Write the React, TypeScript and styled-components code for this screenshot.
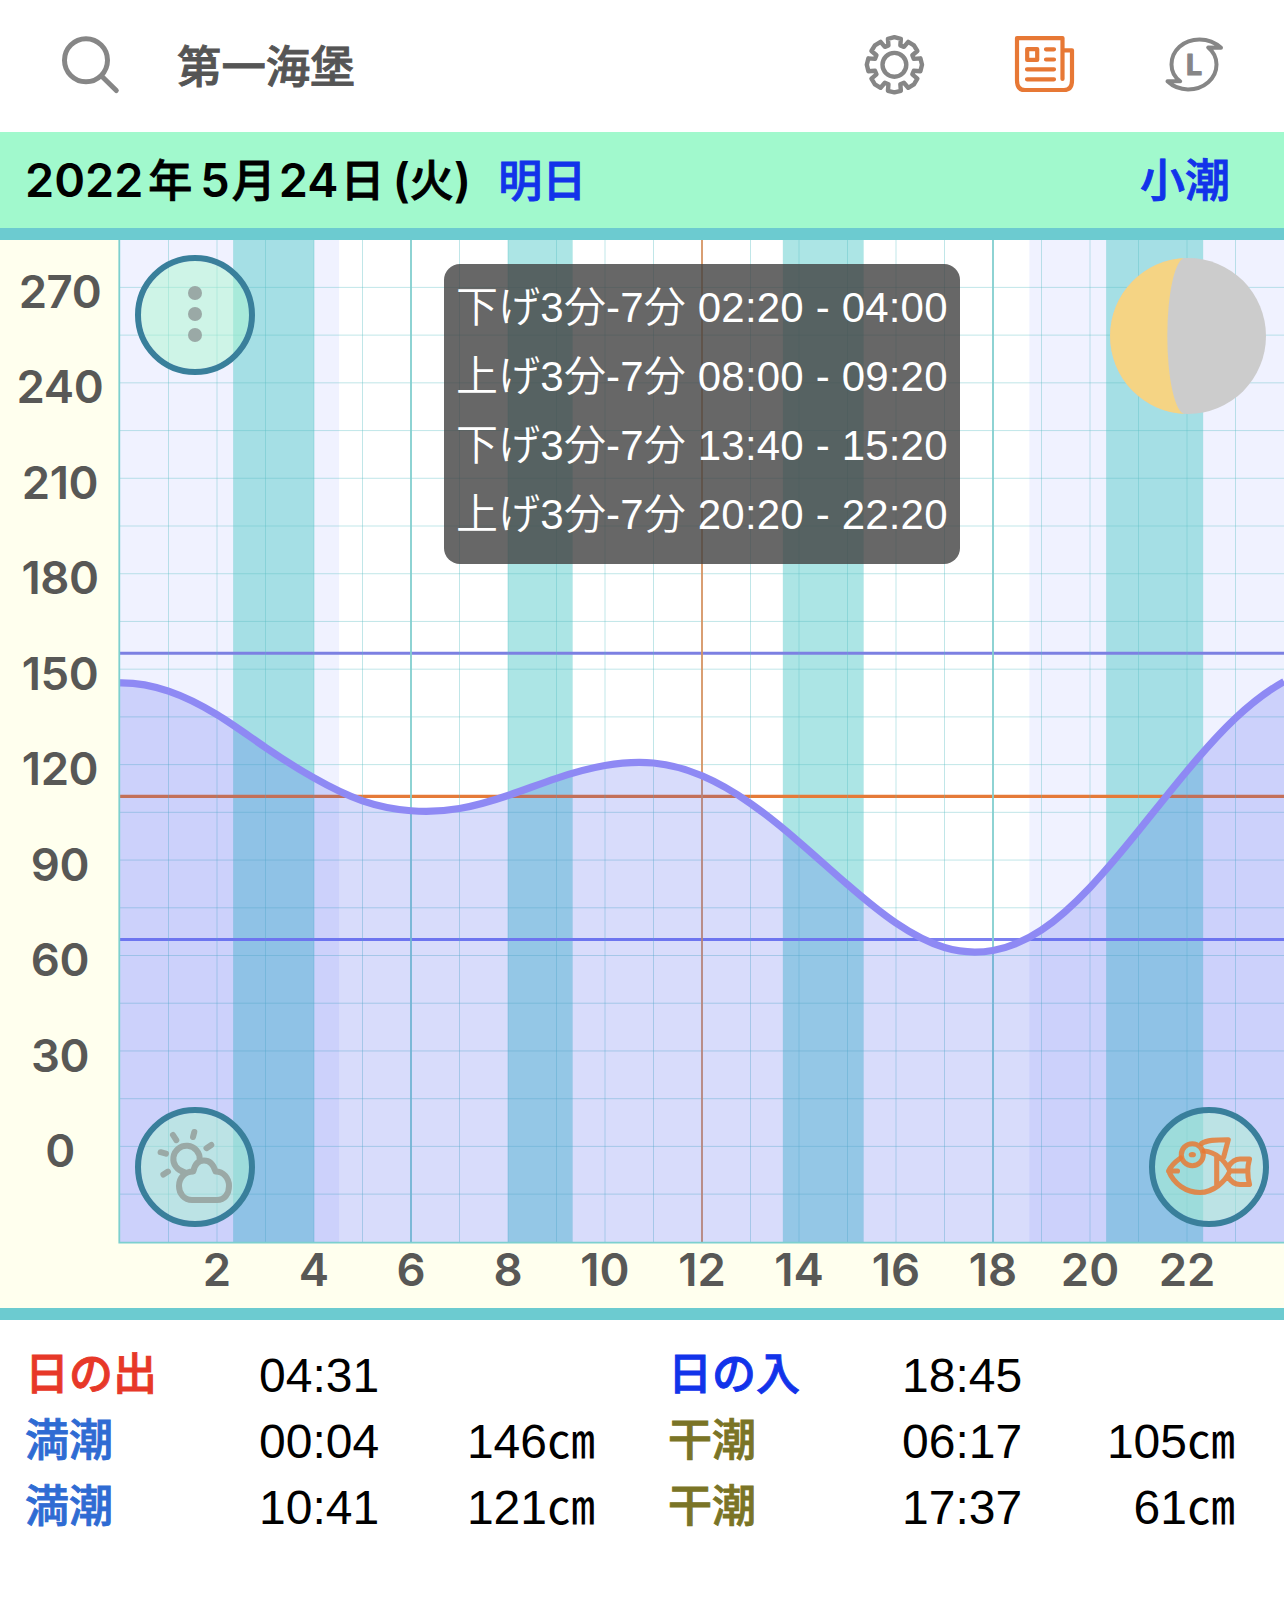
import styled, { createGlobalStyle } from "styled-components";

const GlobalStyle = createGlobalStyle`
  *, *::before, *::after {
    box-sizing: border-box;
  }
  body {
    margin: 0;
    background: #fff;
    font-family: "Liberation Sans", "Noto Sans CJK JP", sans-serif;
  }
  svg {
    display: block;
  }
`;

const Page = styled.div`
  display: flex;
  flex-direction: column;
  width: 1284px;
  height: 1605px;
  overflow: hidden;
  background: #fff;
`;

const Toolbar = styled.header`
  display: flex;
  align-items: center;
  height: 132px;
  padding: 0 56px 3px 58px;
`;
const Place = styled.h1`
  flex: 1;
  margin: -1px 0 0 55px;
  font-family: "Noto Sans CJK JP", sans-serif;
  font-size: 44.4px;
  font-weight: 500;
  line-height: 60px;
  -webkit-text-stroke: 0.9px #555;
  color: #555;
`;
const Tools = styled.nav`
  display: flex;
  align-items: center;
  gap: 86px;
`;
const ToolButton = styled.button<{ $active?: boolean }>`
  width: 64px;
  height: 64px;
  padding: 0;
  border: 0;
  background: none;
  color: ${({ $active }) => ($active ? "#e77835" : "#868686")};
`;

const DateBar = styled.div`
  display: flex;
  align-items: center;
  height: 96px;
  padding: 0 54px 0 25px;
  background: #a1f9cd;
  font-family: Inter, "Noto Sans CJK JP", sans-serif;
  font-size: 46.8px;
  font-weight: 600;
  line-height: 96px;
  white-space: nowrap;
  color: #000;
`;
const DatePart = styled.span<{ $gap?: number }>`
  margin-left: ${({ $gap = 0 }) => $gap}px;
`;
const Kanji = styled.span<{ $gap?: number }>`
  margin: -4px 0 0 ${({ $gap = 0 }) => $gap}px;
  font-family: "Noto Sans CJK JP", sans-serif;
  font-size: 44px;
  font-weight: 500;
  -webkit-text-stroke: 0.9px currentColor;
`;
const Relative = styled(Kanji)`
  flex: 1;
  color: #1233ea;
`;
const TideName = styled(Kanji)`
  font-size: 45px;
  color: #1233ea;
`;

const Chart = styled.section`
  display: grid;
  grid-template-columns: 120px 1fr;
  grid-template-rows: 1003px 65px;
  height: 1092px;
  border-top: 12px solid #6ccbd0;
  border-bottom: 12px solid #6ccbd0;
  background: #ffffee;
  font-family: Inter, sans-serif;
  font-size: 45.5px;
  font-weight: 600;
  color: #585856;
`;
const Levels = styled.div`
  display: flex;
  flex-direction: column;
  padding-top: 4px;
`;
const Level = styled.div`
  height: 95.45px;
  line-height: 95.45px;
  letter-spacing: -0.4px;
  text-align: center;
`;
const Hours = styled.div`
  display: flex;
  grid-column: 2;
  padding-left: 48.5px;
`;
const Hour = styled.div`
  width: 97px;
  line-height: 53px;
  text-align: center;
`;
const Plot = styled.div`
  position: relative;
`;

const RoundButton = styled.button<{ $side: "left" | "right"; $edge: "top" | "bottom"; $active?: boolean }>`
  position: absolute;
  ${({ $side }) => $side}: 15px;
  ${({ $edge }) => $edge}: ${({ $edge }) => ($edge === "top" ? 15 : 16)}px;
  width: 120px;
  height: 120px;
  padding: 0;
  border: 6px solid #397f9b;
  border-radius: 50%;
  background: rgba(172, 246, 208, 0.5);
  background-clip: padding-box;
  color: ${({ $active }) => ($active ? "rgba(232, 120, 50, 0.84)" : "#9aa9a6")};
`;

const Moon = styled.svg`
  position: absolute;
  top: 18px;
  right: 18px;
`;

const Popup = styled.div`
  position: absolute;
  top: 24px;
  left: 324px;
  width: 516px;
  height: 300px;
  padding: 9px 0 0 12px;
  border-radius: 16px;
  background: rgba(65, 65, 65, 0.8);
  color: #fff;
  font-family: "Liberation Sans", "Noto Sans CJK JP", sans-serif;
  font-size: 42px;
  font-weight: 350;
  letter-spacing: 0.18px;
  white-space: nowrap;
`;
const PopupRow = styled.div`
  height: 69px;
  line-height: 69px;
`;

const Details = styled.section`
  display: grid;
  grid-template-columns: 234px 206px 130px 73px 234px 206px 127px;
  grid-auto-rows: 66px;
  padding: 22px 0 0 25px;
  line-height: 66px;
`;
const Label = styled.div<{ $color: string }>`
  margin-top: -4px;
  font-family: "Noto Sans CJK JP", sans-serif;
  font-size: 44px;
  font-weight: 500;
  -webkit-text-stroke: 0.9px currentColor;
  color: ${({ $color }) => $color};
`;
const Time = styled.div`
  padding-top: 1px;
  font-size: 48px;
  white-space: nowrap;
  color: #000;
`;
const Height = styled(Time)`
  display: flex;
  justify-content: flex-end;
`;
const Spacer = styled.div``;

const HOUR = 48.5;
const CM = 3.1815;
const PLOT_W = 1164;
const PLOT_H = 1003;

const xOf = (h: number) => h * HOUR;
const yOf = (cm: number) => 906.4 - cm * CM;

// tide height for every hour, with two extra hours on both ends for the tangents
const tide = [
  135.5, 142.8, 145.7, 143.1, 135.7, 125.4, 115.8, 108.6, 105.5, 106.2, 110.3, 115.7, 119.7, 120.5,
  116.5, 107.8, 95.7, 82.3, 70.2, 62.5, 61.6, 68, 81.4, 99.2, 118, 134.6, 146.1, 151.5, 151,
];

const slope = (i: number) => (8 * (tide[i + 1] - tide[i - 1]) - (tide[i + 2] - tide[i - 2])) / 12;

const tidePath = () => {
  let d = `M0 ${yOf(tide[2])}`;
  for (let h = 0; h < 24; h++) {
    const i = h + 2;
    const c1 = tide[i] + slope(i) / 3;
    const c2 = tide[i + 1] - slope(i + 1) / 3;
    d += ` C${xOf(h + 1 / 3)} ${yOf(c1)} ${xOf(h + 2 / 3)} ${yOf(c2)} ${xOf(h + 1)} ${yOf(tide[i + 1])}`;
  }
  return d;
};

const nights = [
  [0, 4.517],
  [18.75, 24],
];
const bands = [
  [2.333, 4],
  [8, 9.333],
  [13.667, 15.333],
  [20.333, 22.333],
];
const popupRows = [
  "下げ3分-7分 02:20 - 04:00",
  "上げ3分-7分 08:00 - 09:20",
  "下げ3分-7分 13:40 - 15:20",
  "上げ3分-7分 20:20 - 22:20",
];
const levels = [270, 240, 210, 180, 150, 120, 90, 60, 30, 0];
const hours = [2, 4, 6, 8, 10, 12, 14, 16, 18, 20, 22];

const hourColor = (h: number) => {
  if (h === 12) return "#d59463";
  return h % 6 === 0 ? "#82cfcf" : "rgba(90, 190, 195, 0.38)";
};

const TideChart = () => {
  const line = tidePath();
  return (
    <svg width={PLOT_W} height={PLOT_H} viewBox={`0 0 ${PLOT_W} ${PLOT_H}`} overflow="visible">
      <rect width={PLOT_W} height={PLOT_H} fill="#fff" />
      {nights.map(([from, to]) => (
        <rect key={from} x={xOf(from)} width={xOf(to - from)} height={PLOT_H} fill="#f0f2ff" />
      ))}
      {bands.map(([from, to]) => (
        <rect key={from} x={xOf(from)} width={xOf(to - from)} height={PLOT_H} fill="rgba(89, 203, 203, 0.5)" />
      ))}
      {Array.from({ length: 20 }, (_, i) => (
        <line key={i} x2={PLOT_W} y1={yOf(270 - i * 15)} y2={yOf(270 - i * 15)} stroke="rgba(90, 190, 195, 0.38)" />
      ))}
      <line x2={PLOT_W} y1={yOf(155)} y2={yOf(155)} stroke="#7c80e2" strokeWidth="3" />
      <line x2={PLOT_W} y1={yOf(110)} y2={yOf(110)} stroke="#e57a38" strokeWidth="3.2" />
      <line x2={PLOT_W} y1={yOf(65)} y2={yOf(65)} stroke="#7c80f0" strokeWidth="3" />
      {Array.from({ length: 23 }, (_, i) => i + 1).map((h) => (
        <line
          key={h}
          x1={xOf(h)}
          x2={xOf(h)}
          y2={PLOT_H}
          stroke={hourColor(h)}
          strokeWidth={h % 6 === 0 ? 1.8 : 1}
        />
      ))}
      <path d={`${line} V${PLOT_H} H0 Z`} fill="rgba(50, 70, 235, 0.19)" />
      <path d={line} fill="none" stroke="#8e89f4" strokeWidth="7.2" />
      <path d={`M-0.7 0 V${PLOT_H - 0.3} H${PLOT_W}`} fill="none" stroke="#7dd0cf" strokeWidth="1.8" />
    </svg>
  );
};

const SearchIcon = () => (
  <svg width="64" height="64" viewBox="0 0 64 64" fill="none" stroke="currentColor" strokeWidth="5" strokeLinecap="round">
    <circle cx="28" cy="27.2" r="21.5" />
    <path d="M43.5 43 L58.3 57.5" />
  </svg>
);

const gearPath = () => {
  const pts: string[] = [];
  for (let i = 0; i < 8; i++) {
    [
      [-17, 20.3],
      [-14, 26.8],
      [0, 27.6],
      [14, 26.8],
      [17, 20.3],
    ].forEach(([deg, r]) => {
      const a = ((i * 45 + deg) * Math.PI) / 180;
      pts.push(`${(32 + r * Math.sin(a)).toFixed(2)} ${(32 - r * Math.cos(a)).toFixed(2)}`);
    });
  }
  return `M${pts.join(" L")} Z`;
};

const GearIcon = () => (
  <svg width="64" height="64" viewBox="1.6 0.2 64 64" fill="none" stroke="currentColor" strokeWidth="4.4" strokeLinejoin="round">
    <path d={gearPath()} />
    <circle cx="32" cy="32" r="11.9" />
  </svg>
);

const NewsIcon = () => (
  <svg width="64" height="64" viewBox="2 -0.5 64 64" fill="none" stroke="currentColor" strokeWidth="4.2" strokeLinecap="round" strokeLinejoin="round">
    <path d="M50.5 45.5 V4.6 H5 V47 Q5 56.5 13 56.5 H52 Q60 56.5 60 47 V16.8 H51" />
    <rect x="15.2" y="15.6" width="10" height="10.8" />
    <path d="M34 15.8 H42 M34 26 H42 M15 35.8 H42 M15 45.8 H42" />
  </svg>
);

const TyphoonIcon = () => (
  <svg width="64" height="64" viewBox="0.5 -1 64 64" fill="none" stroke="currentColor" strokeWidth="4" strokeLinejoin="round">
    <path d="M57.5 13.8 C51 7.6 43 5.4 36 5.4 C20 5.4 8 16.5 8 30.5 C8 37 10.8 43 16.7 47.3 L4 47.3 C10 53 17.5 55.4 24.5 55.4 C40.5 55.4 53 44.5 53 30.5 C53 24 50.2 18 44.7 13.5 Z" />
    <text
      x="22.6"
      y="40.6"
      fontFamily="Inter, sans-serif"
      fontSize="28.5"
      fontWeight="700"
      fill="currentColor"
      strokeWidth="1.2"
    >
      L
    </text>
  </svg>
);

const DotsIcon = () => (
  <svg viewBox="6 6 108 108" fill="currentColor">
    <circle cx="60" cy="38" r="7" />
    <circle cx="60" cy="59" r="7" />
    <circle cx="60" cy="80" r="7" />
  </svg>
);

const WeatherIcon = () => (
  <svg viewBox="6 6 108 108" fill="none" stroke="currentColor" strokeWidth="6" strokeLinecap="round" strokeLinejoin="round">
    <path d="M64.7 52.5 A13.2 13.2 0 1 0 49 64.9" />
    <path d="M38 28 L41.3 33.2 M59.3 25 L58 30 M76.3 38 L71.5 41.2 M25.6 45.2 L31 46.7 M28.4 67.6 L33 64.6" />
    <path d="M57 93 H82 C89.5 93 94 87 94 79 C94 71 88.5 64.5 80.5 64.5 C78.5 57.5 75 53.5 69 53.5 C63 53.5 59.5 58 58.3 64.5 C50 64.5 44 70.5 44 79 C44 87 49.5 93 57 93 Z" />
  </svg>
);

const FishIcon = () => (
  <svg viewBox="6 6 108 108" fill="none" stroke="currentColor" strokeWidth="5.1" strokeLinecap="round" strokeLinejoin="round">
    <path
      d="M55 44 C67 45 76 54 81 64 C76 75 64 85.5 51 85.5 C37 85.5 25 77 19.6 64 C22 58.5 26 55 31.5 51
      M19.6 64 H28.5 M67.7 48.5 V79.5
      M52.7 36.5 C58 33 66 32.7 79.3 32.7 L74.7 50
      M79 60 C83 54 87 52 91 52 H100.5 Q97 64 100.5 77.5 H91 C86 77.5 82 75 79 69.5 M82 64 H97"
    />
    <circle cx="43.3" cy="47.7" r="11" />
    <ellipse cx="43.3" cy="47.7" rx="3.6" ry="2.6" fill="currentColor" stroke="none" />
  </svg>
);

const App = () => {
  return (
    <>
      <GlobalStyle />
      <Page>
        <Toolbar>
          <ToolButton type="button">
            <SearchIcon />
          </ToolButton>
          <Place>第一海堡</Place>
          <Tools>
            <ToolButton type="button">
              <GearIcon />
            </ToolButton>
            <ToolButton type="button" $active>
              <NewsIcon />
            </ToolButton>
            <ToolButton type="button">
              <TyphoonIcon />
            </ToolButton>
          </Tools>
        </Toolbar>
        <DateBar>
          <DatePart>2022</DatePart>
          <Kanji $gap={5}>年</Kanji>
          <DatePart $gap={8}>5</DatePart>
          <Kanji $gap={2}>月</Kanji>
          <DatePart $gap={3}>24</DatePart>
          <Kanji $gap={2}>日</Kanji>
          <DatePart $gap={8}>(</DatePart>
          <Kanji>火</Kanji>
          <DatePart>)</DatePart>
          <Relative $gap={27}>明日</Relative>
          <TideName>小潮</TideName>
        </DateBar>
        <Chart>
          <Levels>
            {levels.map((level) => (
              <Level key={level}>{level}</Level>
            ))}
          </Levels>
          <Plot>
            <TideChart />
            <Popup>
              {popupRows.map((row) => (
                <PopupRow key={row}>{row}</PopupRow>
              ))}
            </Popup>
            <Moon width="156" height="156" viewBox="0 0 156 156">
              <circle cx="78" cy="78" r="78" fill="#ccc" />
              <path d="M75 0.06 A78 78 0 0 0 75 155.94 A17.7 77.94 0 0 1 75 0.06 Z" fill="#f5d484" />
            </Moon>
            <RoundButton type="button" $side="left" $edge="top">
              <DotsIcon />
            </RoundButton>
            <RoundButton type="button" $side="left" $edge="bottom">
              <WeatherIcon />
            </RoundButton>
            <RoundButton type="button" $side="right" $edge="bottom" $active>
              <FishIcon />
            </RoundButton>
          </Plot>
          <Hours>
            {hours.map((hour) => (
              <Hour key={hour}>{hour}</Hour>
            ))}
          </Hours>
        </Chart>
        <Details>
          <Label $color="#e73828">日の出</Label>
          <Time>04:31</Time>
          <Spacer />
          <Spacer />
          <Label $color="#1233ea">日の入</Label>
          <Time>18:45</Time>
          <Spacer />

          <Label $color="#2f6bd3">満潮</Label>
          <Time>00:04</Time>
          <Height>146㎝</Height>
          <Spacer />
          <Label $color="#7a7426">干潮</Label>
          <Time>06:17</Time>
          <Height>105㎝</Height>

          <Label $color="#2f6bd3">満潮</Label>
          <Time>10:41</Time>
          <Height>121㎝</Height>
          <Spacer />
          <Label $color="#7a7426">干潮</Label>
          <Time>17:37</Time>
          <Height>61㎝</Height>
        </Details>
      </Page>
    </>
  );
};

export default App;
